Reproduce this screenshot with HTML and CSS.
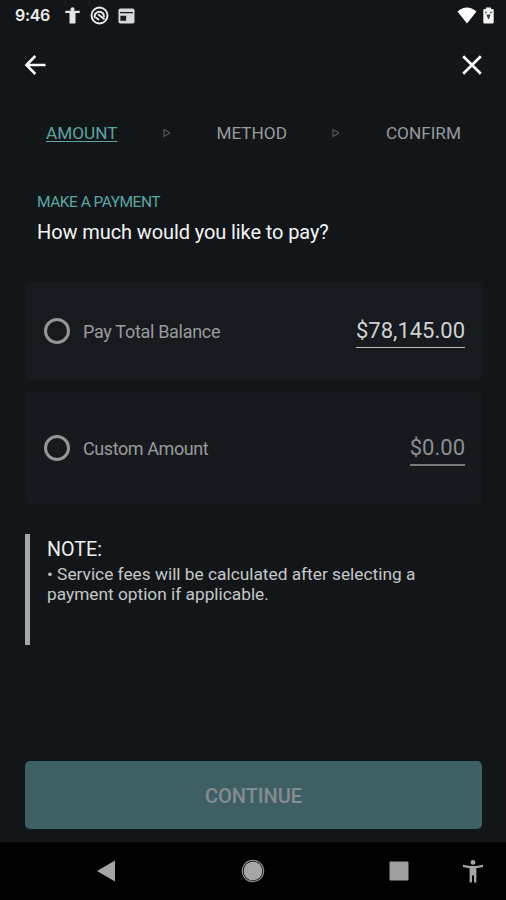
FILE: index.html
```html
<!DOCTYPE html>
<html lang="en">
<head>
<meta charset="utf-8">
<title>Make a Payment</title>
<link rel="stylesheet" href="styles.css">
</head>
<body>
<div class="screen">
  <header class="status">
    <span class="clock">9:46</span>
    <svg class="status-person" width="15" height="17" viewBox="0 0 15 17"><circle cx="7.500" cy="2.200" r="2"/><path d="M.3 3.800h14.400v2.200H10.500V16.500h-6V6H.3z"/></svg>
    <svg class="status-sync" width="19" height="19" viewBox="0 0 19 19" fill="none" stroke="#ececec"><circle cx="9.500" cy="9.500" r="8" stroke-width="1.900"/><path d="M5 12.200A4.700 4.700 0 1 1 14 11M8 8.300l6.500 5" stroke-width="2"/><path d="M6 11.500l3 2.500" stroke-width="1.800"/></svg>
    <svg class="status-card" width="17" height="16" viewBox="0 0 17 16"><rect x=".5" y=".5" width="16" height="15" rx="1.800" fill="#d8d8d8"/><path d="M2 4.700h13M3 8.500h4.500v3.500H3z" stroke="#191c1f" stroke-width="1.300" fill="#191c1f"/></svg>
    <svg class="wifi" width="20" height="17" viewBox="0 0 20 17"><path d="M.5 4.500Q10-3.500 19.500 4.500L10 16.500z" fill="#fff"/></svg>
    <svg class="battery" width="11" height="17" viewBox="0 0 11 17"><path d="M3 2V.5h5V2h1.500q1.200 0 1.200 1.200v12q0 1.300-1.200 1.300h-8Q.3 16.500.3 15.200v-12Q.3 2 1.500 2z" fill="#f4f4f4"/><path d="M2.200 4.800h1.500v1.500H2.200zM7.300 4.800h1.500v1.500H7.300zM3.500 7.500h4L6 12H5z" fill="#3b3e40"/></svg>
  </header>
  <nav class="toolbar">
    <svg width="22" height="20" viewBox="0 0 22 20" fill="none" stroke="#fff" stroke-width="2.500"><path d="M11.300 1 2.400 10l8.900 9M2.500 10h19"/></svg>
    <svg width="20" height="20" viewBox="0 0 20 20" fill="none" stroke="#fff" stroke-width="2.700"><path d="m1.200 1.200 17.600 17.600M18.800 1.200 1.200 18.800"/></svg>
  </nav>
  <div class="steps">
    <span class="step active">AMOUNT</span>
    <svg width="8" height="9" viewBox="0 0 8 9" fill="none" stroke="#707375" stroke-width=".9"><path d="M1 .5v7l6-3.500z"/></svg>
    <span class="step">METHOD</span>
    <svg width="8" height="9" viewBox="0 0 8 9" fill="none" stroke="#707375" stroke-width=".9"><path d="M1 .5v7l6-3.500z"/></svg>
    <span class="step">CONFIRM</span>
  </div>
  <div class="eyebrow">MAKE A PAYMENT</div>
  <h1 class="title">How much would you like to pay?</h1>
  <main class="options">
    <div class="option">
      <span class="radio"></span><span class="label">Pay Total Balance</span>
      <span class="amount">$78,145.00</span>
    </div>
    <div class="option custom">
      <span class="radio"></span><span class="label">Custom Amount</span>
      <span class="amount">$0.00</span>
    </div>
  </main>
  <section class="note">
    <h2 class="note-title">NOTE:</h2>
    <p class="note-text">• Service fees will be calculated after selecting a<br>payment option if applicable.</p>
  </section>
  <button class="continue">CONTINUE</button>
  <footer class="system-nav">
    <svg class="nav-back" width="18" height="22" viewBox="0 0 18 22"><path d="M0 11 18 .5v21z" fill="#a5a5a5"/></svg>
    <svg class="nav-home" width="24" height="24" viewBox="0 0 24 24"><circle cx="12" cy="12" r="10.700" fill="none" stroke="#929292" stroke-width="1.100"/><circle cx="12" cy="12" r="9.400" fill="#a5a5a5"/></svg>
    <svg class="nav-recent" width="20" height="20" viewBox="0 0 20 20"><rect x=".5" y=".5" width="19" height="19" rx="1.200" fill="#a0a0a0"/></svg>
    <svg class="nav-person" width="20" height="23" viewBox="0 0 20 23"><circle cx="10" cy="2.400" r="2.400"/><path d="M0 4.700Q10 7.300 20 4.700V7Q16 8 13.400 8.200V22.500H11V15.500H9V22.500H6.600V8.200Q4 8 0 7z"/></svg>
  </footer>
</div>
</body>
</html>
```
FILE: styles.css
```css
* { box-sizing: border-box; }
body { margin: 0; background: #121619; font-family: Roboto, "Liberation Sans", sans-serif; }
svg { display: block; flex: none; }
.screen { width: 506px; height: 900px; display: flex; flex-direction: column; overflow: hidden; color: #999b9d; }
.status { height: 31px; display: flex; align-items: center; padding: 0 12px 0 15px; flex: none; }
.clock { width: 50px; font: 600 16px/31px Inter, sans-serif; color: #ededed; letter-spacing: -.3px; }
.status-person { fill: #e5e5e5; }
.status-sync { margin-left: 10px; }
.status-card { margin-left: 9px; }
.wifi { margin-left: auto; }
.battery { margin-left: 6px; }
.toolbar { height: 66px; display: flex; align-items: center; justify-content: space-between; padding: 1px 24px 0 23.500px; flex: none; }
.steps { height: 72px; display: flex; align-items: center; justify-content: space-between; padding: 0 45px 0 46px; flex: none; }
.step { font-size: 17.200px; line-height: 20px; }
.active { color: #5ba6a2; text-decoration: underline; text-decoration-thickness: 1px; text-underline-offset: 2px; }
.eyebrow { margin: 24px 0 0 37px; font-size: 15.500px; line-height: 18px; letter-spacing: -.5px; color: #5ba6a2; }
.title { margin: 8px 0 0 37px; font-size: 20px; font-weight: 400; line-height: 26px; letter-spacing: -.1px; color: #f5f5f5; }
.options { margin: 37px 24px 0 25px; display: flex; flex-direction: column; gap: 12px; }
.option { height: 98px; display: flex; align-items: center; padding: 0 17px 0 19px; border-radius: 5px; background: #171a1e; }
.custom { height: 112px; background: #16191d; }
.radio { width: 26px; height: 26px; border: 3px solid #94979a; border-radius: 50%; }
.label { margin: 1px 0 0 13px; font-size: 18px; line-height: 24px; letter-spacing: -.3px; }
.custom .label { letter-spacing: -.42px; }
.amount { margin: 2px 0 0 auto; padding-bottom: 1px; font-size: 22px; line-height: 30px; border-bottom: 1px solid #b8babc; color: #d0d2d4; }
.custom .amount { margin-top: 3px; border-bottom: 2px solid #77797b; color: #8d8f91; }
.note { height: 111px; margin: 30px 24px 0 25px; padding: 4px 0 0 17px; border-left: 5px solid #a5a7a8; }
.note-title { margin: 0; font-size: 19.700px; font-weight: 400; line-height: 24px; color: #ededed; }
.note-text { margin: 2px 0 0; font-size: 17.300px; line-height: 20px; color: #c5c7c8; }
.continue { height: 68px; margin: 116px 24px 0 25px; padding: 2px 0 0; border: 0; border-radius: 5px; background: #3e6065; color: #858b90; font: 500 20px/24px Roboto, sans-serif; }
.system-nav { flex: 1; margin-top: 13px; display: flex; align-items: center; background: #000; }
.nav-back { margin-left: 97px; }
.nav-home { margin-left: 126px; }
.nav-recent { margin-left: 124px; }
.nav-person { margin-left: 54px; fill: #a5a5a5; }
```
